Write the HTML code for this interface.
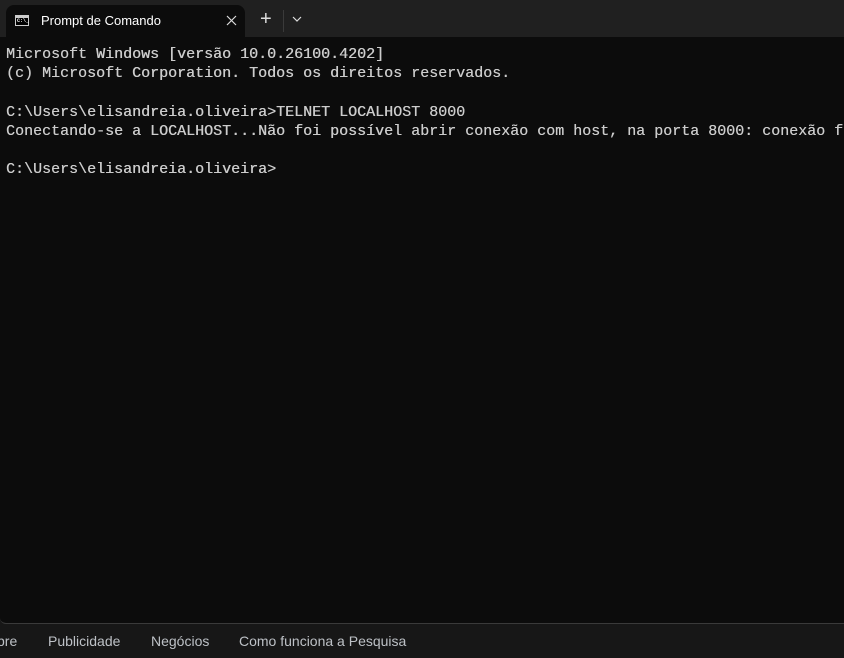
<!DOCTYPE html>
<html><head><meta charset="utf-8"><style>
html,body{margin:0;padding:0;width:844px;height:658px;overflow:hidden;background:#171717}
.top{position:absolute;left:0;top:0;width:844px;height:37px;background:#202020}
.tab{position:absolute;left:6px;top:5px;width:239px;height:32px;background:#0c0c0c;border-radius:8px 8px 0 0}
.tab .t{position:absolute;left:35px;top:8px;font:13px "Liberation Sans",sans-serif;color:#fff}
.tab .ic{position:absolute;left:9px;top:10px;width:14px;height:11px;border:1px solid #ccc;background:#000;box-sizing:border-box}
.tab .ic:before{content:"";position:absolute;left:0;right:0;top:0;height:2px;background:#ccc}
.tab .ic span{position:absolute;left:1px;top:2px;font:bold 5px "Liberation Mono",monospace;color:#fff}
.plus{position:absolute;left:260px;top:9px;color:#ddd;font:20px "Liberation Sans",sans-serif;line-height:20px}
.sep{position:absolute;left:283px;top:10px;width:1px;height:22px;background:#3a3a3a}
.term{position:absolute;left:0;top:37px;width:844px;height:586px;background:#0c0c0c;border-bottom:1px solid #3a3a3a;border-radius:0 0 0 6px}
pre{margin:0;position:absolute;left:6px;top:8px;font:15px/19.2px "Liberation Mono",monospace;color:#cccccc;text-shadow:0.3px 0 0 #cccccc}
.foot{position:absolute;top:633px;font:14px "Liberation Sans",sans-serif;color:#bdc1c6}
</style></head><body>
<div class="top">
<div class="tab"><div class="ic"><span>C:\_</span></div><div class="t">Prompt de Comando</div>
<svg style="position:absolute;left:220px;top:10px" width="11" height="11"><path d="M1 1L10 10M10 1L1 10" stroke="#ddd" stroke-width="1.2"/></svg></div>
<div class="plus">+</div><div class="sep"></div>
<svg style="position:absolute;left:292px;top:16px" width="10" height="6"><path d="M1 1L5 5L9 1" stroke="#ddd" fill="none" stroke-width="1.2"/></svg>
</div>
<div class="term"><pre>Microsoft Windows [versão 10.0.26100.4202]
(c) Microsoft Corporation. Todos os direitos reservados.

C:\Users\elisandreia.oliveira&gt;TELNET LOCALHOST 8000
Conectando-se a LOCALHOST...Não foi possível abrir conexão com host, na porta 8000: conexão fa

C:\Users\elisandreia.oliveira&gt;</pre></div>
<div class="foot" style="left:-3px">bre</div>
<div class="foot" style="left:48px">Publicidade</div>
<div class="foot" style="left:151px">Negócios</div>
<div class="foot" style="left:239px">Como funciona a Pesquisa</div>
</body></html>
